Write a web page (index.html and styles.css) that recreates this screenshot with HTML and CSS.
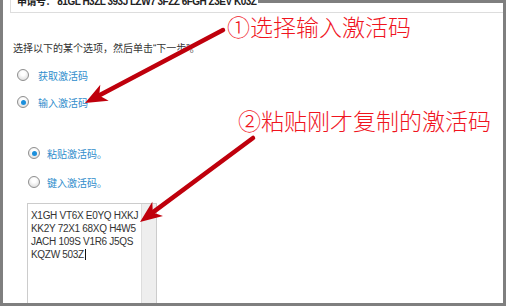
FILE: index.html
```html
<!DOCTYPE html>
<html lang="zh-CN">
<head>
  <meta charset="UTF-8">
  <title>输入激活码</title>
  <link rel="stylesheet" href="styles.css">
</head>
<body>

  <div class="shot">
    <div class="frame">
      <!-- serial number strip, cut off at the top -->
      <div class="header">
        <span class="serial">申请号： 81GL H3ZL 393J LZW7 3FZZ 6FGH Z3EV K03Z</span>
        <span class="edge"></span>
      </div>

      <div class="content">
        <p class="lead">选择以下的某个选项，然后单击“下一步”。</p>

        <div class="opts">
          <label class="opt first"><span class="radio"></span>获取激活码</label>
          <label class="opt second"><span class="radio on"></span>输入激活码</label>
        </div>

        <div class="sub">
          <label class="opt paste"><span class="radio on"></span>粘贴激活码。</label>
          <label class="opt type"><span class="radio"></span>键入激活码。</label>

          <div class="codebox">
            <div class="codes">X1GH VT6X E0YQ HXKJ<br>KK2Y 72X1 68XQ H4W5<br>JACH 109S V1R6 J5QS<br>KQZW 503Z<span class="caret"></span></div>
            <div class="track"></div>
          </div>
        </div>
      </div>
    </div>

    <!-- annotations drawn over the screenshot -->
    <svg class="marks" width="506" height="306" viewBox="0 0 506 306">
      <g stroke="#bf000c" stroke-width="4.5" stroke-linecap="round" fill="none">
        <line x1="223" y1="30" x2="99" y2="95.5"/>
        <line x1="253" y1="138" x2="152.8" y2="212.4"/>
      </g>
      <g fill="#bf000c">
        <path d="M85 103 L100.3 84.7 L99.2 95.5 L108.7 100.7 Z"/>
        <path d="M140 222 L152.3 201.7 L152.8 212.4 L163 216 Z"/>
      </g>
    </svg>
    <div class="note note-one">①选择输入激活码</div>
    <div class="note note-two">②粘贴刚才复制的激活码</div>
  </div>

</body>
</html>
```

FILE: styles.css
```css
body {
  margin: 0;
  font-family: "Liberation Sans", "Noto Sans CJK SC", sans-serif;
  background: #fff;
}
.shot {
  position: relative;
  width: 506px;
  height: 306px;
}
.frame {
  width: 506px;
  height: 306px;
  box-sizing: border-box;
  border: 3px solid #7f7f7f;
  border-top: 0;
  overflow: hidden;
  background: #fff;
}
.header {
  display: flex;
  height: 12px;
  margin-left: 7px;
  border-left: 1px solid #ddd;
  border-bottom: 1px solid #ddd;
  overflow: hidden;
}
.serial {
  align-self: flex-end;
  padding: 0 0 5px 6px;
  font-size: 10px;
  line-height: 10px;
  font-weight: bold;
  color: #222;
  letter-spacing: -0.5px;
  white-space: nowrap;
}
.edge {
  flex: 1;
  height: 3px;
  margin-left: 2px;
  background: #7f7f7f;
}
.content {
  padding-left: 10px;
}
.lead {
  margin: 29px 0 0;
  font-size: 10px;
  line-height: 14px;
  color: #333;
}
.opts {
  padding-left: 4px;
}
.opt {
  display: flex;
  align-items: center;
  gap: 9px;
  height: 14px;
  font-size: 10px;
  color: #2f8dcc;
}
.first {
  margin-top: 12px;
}
.second {
  margin-top: 13px;
}
.sub {
  padding-left: 14px;
}
.sub .opt {
  gap: 7px;
  padding-left: 1px;
}
.paste {
  margin-top: 37px;
}
.type {
  margin-top: 15px;
}
.radio {
  width: 10px;
  height: 10px;
  border: 1px solid #8e8e8e;
  border-radius: 50%;
  background: radial-gradient(circle at 50% 35%, #fff 25%, #d4d4d4 100%);
  display: flex;
  align-items: center;
  justify-content: center;
}
.radio.on::after {
  content: "";
  width: 5px;
  height: 5px;
  border-radius: 50%;
  background: #1b8fdc;
}
.codebox {
  display: flex;
  width: 130px;
  height: 100px;
  margin-top: 14px;
  box-sizing: border-box;
  border: 1px solid #ccc;
  border-bottom: 0;
}
.codes {
  flex: 1;
  padding: 5px 0 0 3px;
  font-size: 10px;
  line-height: 13px;
  letter-spacing: -0.3px;
  color: #333;
}
.caret {
  display: inline-block;
  width: 1px;
  height: 11px;
  margin-left: 1px;
  vertical-align: -2px;
  background: #111;
}
.track {
  width: 14px;
  background: #eee;
  border-left: 1px solid #ddd;
}
.marks {
  position: absolute;
  left: 0;
  top: 0;
}
.note {
  position: absolute;
  font-family: "Noto Sans CJK SC", sans-serif;
  font-size: 23px;
  font-weight: 300;
  line-height: 23px;
  color: #f0141e;
  white-space: nowrap;
}
.note-one {
  left: 227px;
  top: 15px;
}
.note-two {
  left: 238px;
  top: 109px;
}
```
